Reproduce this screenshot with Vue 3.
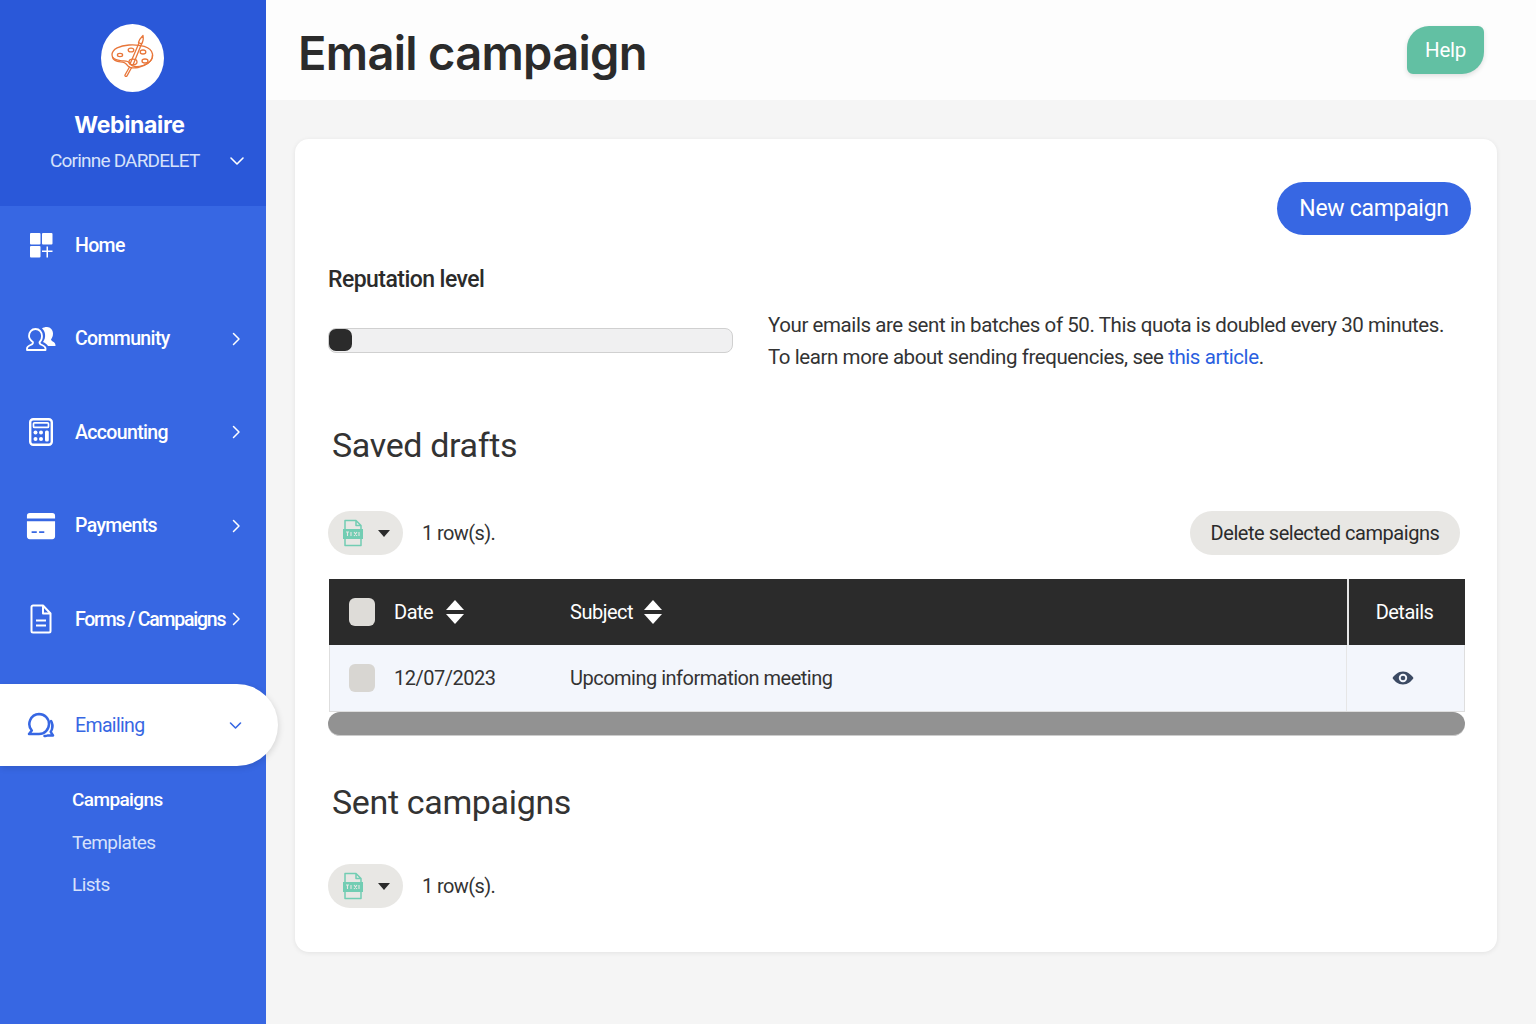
<script setup>
const menu = [
  { label: 'Home', icon: 'home' },
  { label: 'Community', icon: 'community', arrow: true },
  { label: 'Accounting', icon: 'accounting', arrow: true },
  { label: 'Payments', icon: 'payments', arrow: true },
  { label: 'Forms / Campaigns', icon: 'forms', arrow: true, tight: true }
]

const subMenu = [
  { label: 'Campaigns', active: true },
  { label: 'Templates' },
  { label: 'Lists' }
]
</script>

<template>
  <div class="layout">
    <aside class="sidebar">
      <div class="brand">
        <div class="logo">
          <svg width="50" height="50" viewBox="0 0 50 50" fill="none" stroke="#e8763a" stroke-width="1.3" stroke-linecap="round" stroke-linejoin="round">
            <path d="M4 22c0-6 8-9.500 17-10 11-.6 22 1.500 23.500 9 .9 5-3 9.500-9.500 11.500-4.500 1.400-8 1.300-10.500.3-2-.8-2.800-3.400-5-4.300-2.200-.8-4.500-.3-7-.8C7.500 27 4 25.500 4 22z" />
            <path d="M4.500 24.500c1 3 5 4 8 4.300 3 .2 5 .8 6.500 3 2 3 6 3.700 11 2.700 7.500-1.500 14.500-6 14.500-12" />
            <ellipse cx="12" cy="22" rx="2.600" ry="1.600" />
            <ellipse cx="23" cy="17" rx="2.800" ry="1.900" />
            <ellipse cx="35" cy="19" rx="2.800" ry="2" />
            <ellipse cx="37" cy="28" rx="3" ry="2" />
            <ellipse cx="25" cy="29" rx="4" ry="2.800" />
            <path d="M31 10 22 31M33.500 11 25 32" />
            <path d="M30.500 9.500c.5-2.500 2.500-5 4.500-7 .5 2.800.3 6-1.500 8.500z" />
            <path d="M21.500 34 17 42c-.6 1.300 1.300 2 2 .8l4.500-8" />
          </svg>
        </div>
        <div class="brand-name">Webinaire</div>
        <div class="brand-user">
          <span>Corinne DARDELET</span>
          <svg class="user-chevron" width="16" height="10" viewBox="0 0 16 10" fill="none" stroke="#fff" stroke-width="1.600" stroke-linecap="round" stroke-linejoin="round">
            <path d="M2 2l6 6 6-6" />
          </svg>
        </div>
      </div>

      <nav class="nav">
        <a v-for="item in menu" :key="item.label" class="nav-item">
          <span class="nav-icon">
            <svg v-if="item.icon === 'home'" width="24" height="26" viewBox="0 0 24 26" fill="#fff">
              <rect x="1" y="1" width="10.500" height="11.500" rx="1" />
              <rect x="13" y="1" width="10.500" height="11.500" rx="1" />
              <rect x="1" y="14" width="10.500" height="11.500" rx="1" />
              <path d="M17.500 14.500h1.500v4h4.500V20H19v5.500h-1.500V20H13v-1.500h4.500z" />
            </svg>
            <svg v-else-if="item.icon === 'community'" width="30" height="26" viewBox="0 0 30 26" fill="none" stroke="#fff" stroke-width="1.800" stroke-linejoin="round">
              <path fill="#fff" stroke="none" d="M21 1c3.500 0 6 3 6 6.500 0 2.800-1 4.500-2 6 .5 1.500 2 2 3 2.800 1 .7 1.500 2 1.500 3.700H22c-1-2-3-3-5-4 1.500-2 2.500-5 2-8-.3-2.500-1.500-4.500-3-5.500 1-1 3-1.500 5-1.500z" />
              <path fill="#3767e3" d="M9.500 3c4 0 6.500 3.200 6.500 7 0 2.800-1 5-2.500 6.200 0 1.500.8 2.200 2.500 2.800 2 .8 3.500 1.500 3.500 3.500V24H1v-1.500c0-2 1.500-2.700 3.500-3.500 1.700-.6 2.500-1.300 2.500-2.800C5.500 15 3 12.800 3 10c0-3.800 2.500-7 6.500-7z" />
            </svg>
            <svg v-else-if="item.icon === 'accounting'" width="24" height="28" viewBox="0 0 24 28" fill="none">
              <rect x="1.200" y="1.200" width="21.600" height="25.600" rx="3" stroke="#fff" stroke-width="2.400" />
              <rect x="4.500" y="4.800" width="15" height="4.600" rx="1" stroke="#fff" stroke-width="1.700" />
              <g fill="#fff">
                <circle cx="6.500" cy="14.500" r="2" /><circle cx="12" cy="14.500" r="2" /><rect x="16" y="12.500" width="3.800" height="11" rx="1.500" />
                <circle cx="6.500" cy="21" r="2" /><circle cx="12" cy="21" r="2" />
              </g>
            </svg>
            <svg v-else-if="item.icon === 'payments'" width="32" height="28" viewBox="0 0 32 28" fill="#fff">
              <path d="M4 0h24a3 3 0 0 1 3 3v3H1V3a3 3 0 0 1 3-3z" />
              <path fill-rule="evenodd" d="M1 9h30v16a3 3 0 0 1-3 3H4a3 3 0 0 1-3-3zM6 19.500v2h5.500v-2zm8 0v2h5.500v-2z" />
            </svg>
            <svg v-else width="22" height="30" viewBox="0 0 22 30" fill="none" stroke="#fff" stroke-width="2" stroke-linejoin="round">
              <path d="M3 1.500h10l7.500 8V27a1.500 1.500 0 0 1-1.500 1.500H3A1.500 1.500 0 0 1 1.500 27V3A1.500 1.500 0 0 1 3 1.500z" />
              <path d="M13 1.500v8h7.500" />
              <path d="M6 16.500h10M6 21.500h10" />
            </svg>
          </span>
          <span :class="['nav-label', { tight: item.tight }]">{{ item.label }}</span>
          <svg v-if="item.arrow" class="nav-arrow" width="9" height="14" viewBox="0 0 9 14" fill="none" stroke="#fff" stroke-width="1.500" stroke-linecap="round" stroke-linejoin="round">
            <path d="M1.500 1.500 7 7l-5.500 5.500" />
          </svg>
        </a>

        <a class="nav-item active">
          <span class="nav-icon">
            <svg width="28" height="26" viewBox="0 0 28 26" fill="none" stroke="#3767e3" stroke-width="2.500" stroke-linejoin="round" stroke-linecap="round">
              <path d="M12 2a10 10 0 0 1 0 20H2l2.800-3.500A10 10 0 0 1 12 2z" />
              <path d="M24 9c1.500 2.500 2 5 1 8-.3 1-.7 2-1.300 2.800L26 23.500h-5.500c-1 .5-2 .7-3 .5" />
            </svg>
          </span>
          <span class="nav-label">Emailing</span>
          <svg class="nav-arrow down" width="13" height="9" viewBox="0 0 13 9" fill="none" stroke="#3767e3" stroke-width="1.600" stroke-linecap="round" stroke-linejoin="round">
            <path d="M1.500 2 6.500 7l5-5" />
          </svg>
        </a>

        <div class="sub-nav">
          <a v-for="sub in subMenu" :key="sub.label" :class="['sub-item', { active: sub.active }]">{{ sub.label }}</a>
        </div>
      </nav>
    </aside>

    <main class="main">
      <header class="topbar">
        <h1>Email campaign</h1>
        <button class="help-btn">Help</button>
      </header>

      <section class="card">
        <div class="card-actions">
          <button class="new-btn">New campaign</button>
        </div>

        <h3 class="rep-title">Reputation level</h3>
        <div class="reputation">
          <div class="progress"><div class="progress-bar"></div></div>
          <p class="rep-text">
            Your emails are sent in batches of 50. This quota is doubled every 30 minutes.<br />
            To learn more about sending frequencies, see <a class="link">this article</a>.
          </p>
        </div>

        <h2 class="section-title">Saved drafts</h2>
        <div class="toolbar">
          <button class="export-btn">
            <svg width="22" height="28" viewBox="0 0 22 28" fill="none" stroke="#72cdb3" stroke-width="1.500" stroke-linejoin="round">
              <path d="M3 10V1.500h11l5 5V10M3 20v6.500h16V20M14 1.500v5h5" />
              <rect x="1" y="10" width="20" height="10" fill="#72cdb3" stroke="none" />
              <path d="M4 13h3M5.500 13v4M9 13v4M12 13l3 4M15 13l-3 4M17 13v4" stroke="#e8e7e4" stroke-width="1.100" />
            </svg>
            <span class="caret"></span>
          </button>
          <span class="row-count">1 row(s).</span>
          <button class="delete-btn">Delete selected campaigns</button>
        </div>

        <div class="table">
          <div class="thead">
            <div class="cell-main">
              <span class="check light"></span>
              <span class="col-date">Date <i class="sort"></i></span>
              <span class="col-subject">Subject <i class="sort"></i></span>
            </div>
            <div class="cell-details">Details</div>
          </div>
          <div class="tbody">
            <div class="cell-main">
              <span class="check"></span>
              <span class="col-date">12/07/2023</span>
              <span class="col-subject">Upcoming information meeting</span>
            </div>
            <div class="cell-details">
              <svg width="22" height="14" viewBox="0 0 22 14">
                <path fill="#3b4a63" fill-rule="evenodd" d="M11 .5C16 .5 19.500 4 21.500 7 19.500 10 16 13.500 11 13.500S2.500 10 .5 7C2.500 4 6 .5 11 .5zm0 2.300a4.200 4.200 0 1 0 0 8.400 4.200 4.200 0 0 0 0-8.400z" />
                <circle cx="11" cy="7" r="2.300" fill="#3b4a63" />
              </svg>
            </div>
          </div>
          <div class="scrollbar"></div>
        </div>

        <h2 class="section-title sent">Sent campaigns</h2>
        <div class="toolbar last">
          <button class="export-btn">
            <svg width="22" height="28" viewBox="0 0 22 28" fill="none" stroke="#72cdb3" stroke-width="1.500" stroke-linejoin="round">
              <path d="M3 10V1.500h11l5 5V10M3 20v6.500h16V20M14 1.500v5h5" />
              <rect x="1" y="10" width="20" height="10" fill="#72cdb3" stroke="none" />
              <path d="M4 13h3M5.500 13v4M9 13v4M12 13l3 4M15 13l-3 4M17 13v4" stroke="#e8e7e4" stroke-width="1.100" />
            </svg>
            <span class="caret"></span>
          </button>
          <span class="row-count">1 row(s).</span>
        </div>
      </section>
    </main>
  </div>
</template>

<style>
html, body {
  margin: 0;
  background: #f5f5f5;
}
</style>

<style scoped>
.layout {
  display: flex;
  min-height: 1024px;
  font-family: Roboto, "Liberation Sans", sans-serif;
  color: #2b2b2b;
}

.sidebar {
  width: 266px;
  flex-shrink: 0;
  background: #3767e3;
  color: #fff;
}

.brand {
  height: 206px;
  box-sizing: border-box;
  padding-top: 24px;
  background: #2a58d9;
  display: flex;
  flex-direction: column;
  align-items: center;
}

.logo {
  width: 63px;
  height: 68px;
  margin-right: 1px;
  border-radius: 50%;
  background: #fff;
  display: flex;
  align-items: center;
  justify-content: center;
}

.brand-name {
  font-family: Inter, sans-serif;
  font-weight: 700;
  font-size: 23px;
  letter-spacing: -0.35px;
  line-height: 30px;
  margin-top: 18px;
  margin-right: 7px;
}

.brand-user {
  width: 100%;
  box-sizing: border-box;
  padding: 0 21px 0 50px;
  display: flex;
  align-items: center;
  justify-content: space-between;
  font-size: 19px;
  letter-spacing: -0.8px;
  line-height: 28px;
  margin-top: 7px;
  color: #d6e1fb;
}

.nav {
  display: flex;
  flex-direction: column;
  gap: 15.500px;
}

.nav-item {
  height: 78px;
  display: flex;
  align-items: center;
  padding: 0 25px 0 26px;
  color: #fff;
  font-size: 19.500px;
  font-weight: 500;
  letter-spacing: -0.65px;
  box-sizing: border-box;
}

.nav-icon {
  width: 30px;
  display: flex;
  justify-content: center;
  margin-right: 19px;
  flex-shrink: 0;
}

.nav-label {
  flex: 1;
  white-space: nowrap;
}

.nav-label.tight {
  letter-spacing: -1.25px;
}

.nav-item.active {
  height: 82px;
  margin-top: 10.500px;
  width: 278px;
  padding-right: 36px;
  background: #fff;
  color: #3767e3;
  font-weight: 400;
  border-radius: 0 41px 41px 0;
  box-shadow: 1px 2px 6px rgba(0, 0, 0, 0.12);
}

.sub-nav {
  display: flex;
  flex-direction: column;
  gap: 6.500px;
  padding-left: 72px;
}

.sub-item {
  height: 36px;
  display: flex;
  align-items: center;
  font-size: 19px;
  letter-spacing: -0.6px;
  color: #d6e1fb;
}

.sub-item.active {
  color: #fff;
  font-weight: 500;
}

.main {
  flex: 1;
  min-width: 0;
}

.topbar {
  height: 100px;
  background: #fdfdfd;
  display: flex;
  align-items: center;
  justify-content: space-between;
  padding: 0 52px 0 32px;
  box-sizing: border-box;
}

.topbar h1 {
  margin: 4px 0 0;
  font-family: Inter, sans-serif;
  font-size: 47px;
  font-weight: 600;
  letter-spacing: -0.7px;
  color: #2b2b2b;
  line-height: 1;
}

.help-btn {
  width: 77px;
  height: 48px;
  border: none;
  background: #62c0a3;
  color: #fff;
  font-family: inherit;
  font-size: 20.500px;
  letter-spacing: -0.3px;
  border-radius: 22px 6px 22px 6px;
  box-shadow: 0 2px 5px rgba(0, 0, 0, 0.12);
}

.card {
  margin: 39px 39px 0 29px;
  height: 813px;
  box-sizing: border-box;
  padding: 43px 26px 0 33px;
  background: #fff;
  border-radius: 14px;
  box-shadow: 0 1px 5px rgba(0, 0, 0, 0.08);
}

.card-actions {
  display: flex;
  justify-content: flex-end;
}

.new-btn {
  width: 194px;
  height: 53px;
  border: none;
  border-radius: 27px;
  background: #3767e3;
  color: #fff;
  font-family: inherit;
  font-size: 23px;
  letter-spacing: -0.3px;
}

.rep-title {
  margin: 30px 0 0;
  font-size: 23px;
  font-weight: 500;
  letter-spacing: -0.55px;
  line-height: 30px;
}

.reputation {
  display: flex;
  align-items: flex-start;
  margin-top: 14px;
}

.progress {
  width: 405px;
  height: 25px;
  margin-top: 19px;
  box-sizing: border-box;
  border: 1.500px solid #d0d0d0;
  border-radius: 8px;
  background: #f0f0f1;
  flex-shrink: 0;
}

.progress-bar {
  width: 23px;
  height: 22px;
  background: #2b2b2b;
  border-radius: 7px;
}

.rep-text {
  margin: 0 0 0 35px;
  font-size: 20.500px;
  line-height: 32px;
  letter-spacing: -0.42px;
  white-space: nowrap;
  color: #333;
}

.link {
  color: #2a5fe0;
}

.section-title {
  margin: 49px 0 0 4px;
  font-size: 34px;
  font-weight: 400;
  letter-spacing: -0.35px;
  line-height: 46px;
  color: #333;
}

.section-title.sent {
  margin-top: 43px;
}

.toolbar {
  display: flex;
  align-items: center;
  margin-top: 42px;
  height: 45px;
  padding-right: 11px;
}

.toolbar.last {
  margin-top: 38px;
}

.export-btn {
  width: 75px;
  height: 44px;
  border: none;
  border-radius: 22px;
  background: #e8e7e4;
  display: flex;
  align-items: center;
  padding: 0 0 0 14px;
  gap: 14px;
  box-sizing: border-box;
}

.caret {
  width: 0;
  height: 0;
  border-left: 6px solid transparent;
  border-right: 6px solid transparent;
  border-top: 7px solid #2b2b2b;
  margin-top: 2px;
}

.row-count {
  margin-left: 19px;
  font-size: 20px;
  letter-spacing: -0.6px;
  color: #333;
}

.delete-btn {
  margin-left: auto;
  width: 270px;
  height: 44px;
  border: none;
  border-radius: 22px;
  background: #e8e7e4;
  color: #2b2b2b;
  font-family: inherit;
  font-size: 20px;
  letter-spacing: -0.45px;
}

.table {
  margin: 24px 0 0 1px;
  width: 1136px;
}

.thead,
.tbody {
  display: flex;
  height: 66px;
  font-size: 20px;
  letter-spacing: -0.5px;
}

.thead {
  background: #2b2b2b;
  color: #fff;
}

.tbody {
  height: 67px;
  background: #f3f6fc;
  color: #333;
  box-sizing: border-box;
  border: 1px solid #dedede;
  border-top: none;
}

.cell-main {
  flex: 1;
  display: flex;
  align-items: center;
  padding-left: 20px;
}

.cell-details {
  width: 118px;
  flex-shrink: 0;
  display: flex;
  align-items: center;
  justify-content: center;
  border-left: 2px solid #e6e6e6;
  box-sizing: border-box;
  padding-right: 5px;
}

.tbody .cell-main {
  padding-left: 19px;
}

.tbody .cell-details {
  border-left-width: 1px;
  padding-right: 5px;
}

.check {
  width: 26px;
  height: 28px;
  border-radius: 6px;
  background: #d8d6d2;
  flex-shrink: 0;
}

.check.light {
  background: #dedcd8;
}

.col-date {
  width: 176px;
  margin-left: 19px;
  display: flex;
  align-items: center;
  gap: 13px;
  box-sizing: border-box;
}

.col-subject {
  display: flex;
  align-items: center;
  gap: 11px;
}

.sort {
  display: block;
  width: 19px;
  height: 24px;
  position: relative;
}

.sort::before,
.sort::after {
  content: "";
  position: absolute;
  left: 0;
  border-left: 9.500px solid transparent;
  border-right: 9.500px solid transparent;
}

.sort::before {
  top: 0;
  border-bottom: 10px solid #fff;
}

.sort::after {
  bottom: 0;
  border-top: 10px solid #fff;
}

.scrollbar {
  height: 24px;
  margin-left: -1px;
  background: #929292;
  border-radius: 12px;
  border-bottom: 1px solid #ccc;
  box-sizing: border-box;
}
</style>
